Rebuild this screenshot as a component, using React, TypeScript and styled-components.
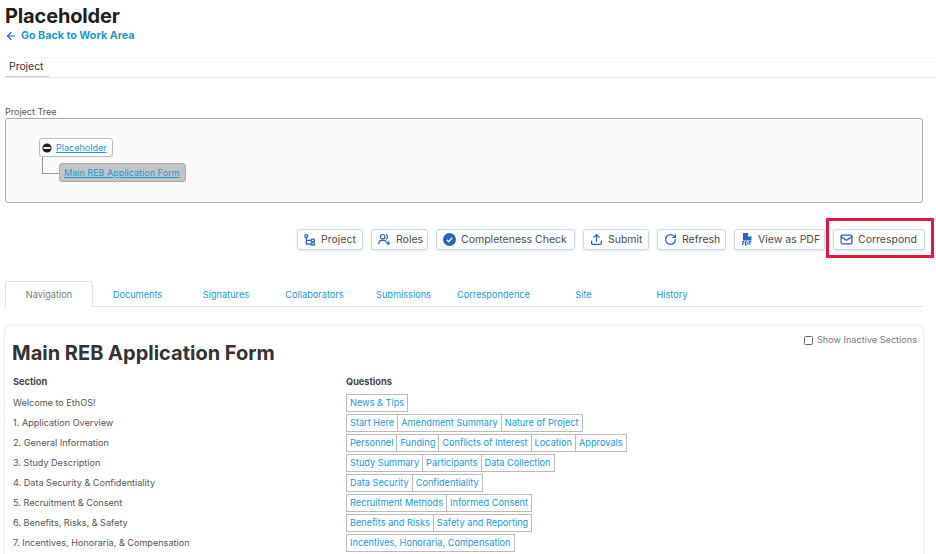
import React from "react";
import styled, { createGlobalStyle } from "styled-components";
import { ArrowLeft, Mail, RotateCw, Upload } from "lucide-react";

const fontStack = `"Inter", "Liberation Sans", sans-serif`;
const linkBlue = "#1a9ad6";
const iconBlue = "#2a62c0";

const GlobalStyle = createGlobalStyle`
  html, body {
    margin: 0;
    padding: 0;
    height: 554px;
    overflow: hidden;
    background: #fff;
    font-family: ${fontStack};
  }
`;

const Page = styled.div`
  position: relative;
  width: 936px;
  height: 554px;
  overflow: hidden;
  box-sizing: border-box;
  padding: 5px 13px 0 5px;
  color: #444;
`;

const Title = styled.h1`
  margin: 0;
  font-size: 20px;
  line-height: 23px;
  font-weight: 700;
  color: #1d1d22;
  letter-spacing: -0.15px;
`;

const BackLink = styled.a`
  display: flex;
  align-items: center;
  gap: 4px;
  height: 15px;
  font-size: 10.7px;
  font-weight: 700;
  color: ${linkBlue};
  svg {
    color: ${iconBlue};
  }
`;

const TopTabs = styled.div`
  display: flex;
  height: 19px;
  margin: 14px -13px 0 0;
  border-top: 1px solid #f4f4f4;
  border-bottom: 1px solid #e6e6e6;
`;

const TopTab = styled.div`
  box-sizing: border-box;
  height: 19px;
  padding: 1px 5px 0 4px;
  font-size: 10.4px;
  line-height: 15px;
  color: #333;
  border-bottom: 1px solid #bcd0ec;
`;

const TreeLabel = styled.div`
  margin-top: 28px;
  font-size: 9px;
  line-height: 12px;
  color: #555;
`;

const TreeBox = styled.div`
  box-sizing: border-box;
  height: 85px;
  padding: 19px 0 0 33px;
  background: #fafafa;
  border: 1px solid #aaa;
  border-radius: 3px;
`;

const RootNode = styled.div`
  display: flex;
  align-items: center;
  gap: 4px;
  box-sizing: border-box;
  width: fit-content;
  height: 19px;
  padding: 0 5px 0 2px;
  background: #fff;
  border: 1px solid #bbb;
  border-radius: 3px;
`;

const NodeLink = styled.a`
  font-size: 9.05px;
  color: ${linkBlue};
  text-decoration: underline;
`;

const ChildRow = styled.div`
  display: flex;
  align-items: flex-start;
  margin-left: 3px;
`;

const Elbow = styled.div`
  width: 16px;
  height: 16px;
  border-left: 1px solid #999;
  border-bottom: 1px solid #999;
`;

const ChildNode = styled.div`
  display: flex;
  align-items: center;
  box-sizing: border-box;
  width: 127px;
  height: 19px;
  margin-top: 6px;
  padding: 0 4px;
  background: #c4c4c4;
  border: 1px solid #aaa;
  border-radius: 3px;
`;

const Toolbar = styled.div`
  display: flex;
  justify-content: flex-end;
  gap: 8px;
  margin: 26px -2px 0 0;
`;

const ActionButton = styled.button<{ $width: number }>`
  display: flex;
  align-items: center;
  gap: 5px;
  box-sizing: border-box;
  width: ${(p) => p.$width}px;
  height: 21px;
  padding: 0 0 0 6px;
  background: #fff;
  border: 1px solid #c9d8f0;
  border-radius: 3px;
  box-shadow: 0 1px 2px rgba(60, 90, 150, 0.15);
  font-family: ${fontStack};
  font-size: 10.5px;
  white-space: nowrap;
  color: #4a4a50;
  svg {
    flex: none;
    color: ${iconBlue};
  }
`;

const Highlight = styled.div`
  position: absolute;
  left: 826px;
  top: 218px;
  width: 108px;
  height: 40px;
  box-sizing: border-box;
  border: 3px solid #e3173e;
`;

const SectionTabs = styled.div`
  display: flex;
  height: 26px;
  margin-top: 31px;
  box-sizing: border-box;
  border-bottom: 1px solid #e2e2e2;
`;

const SectionTab = styled.div<{ $active?: boolean; $width: number }>`
  box-sizing: border-box;
  width: ${(p) => p.$width}px;
  height: ${(p) => (p.$active ? "26px" : "25px")};
  font-size: 9.2px;
  line-height: 27px;
  text-align: center;
  color: ${(p) => (p.$active ? "#777" : linkBlue)};
  background: #fff;
  ${(p) =>
    p.$active &&
    `border: 1px solid #e2e2e2; border-bottom-color: #fff; border-radius: 3px 3px 0 0; line-height: 25px;`}
`;

const Card = styled.div`
  position: relative;
  margin-top: 19px;
  height: 300px;
  box-sizing: border-box;
  padding: 15px 7px 0;
  background: #fff;
  border-radius: 5px;
  box-shadow: 0 0 3px rgba(0, 0, 0, 0.18);
`;

const InactiveToggle = styled.label`
  position: absolute;
  top: 8px;
  right: 6px;
  display: flex;
  align-items: center;
  gap: 4px;
  font-size: 9.15px;
  line-height: 12px;
  color: #777;
`;

const CheckBox = styled.span`
  box-sizing: border-box;
  width: 9px;
  height: 9px;
  border: 1px solid #666;
  border-radius: 1.5px;
`;

const FormTitle = styled.h2`
  margin: 0;
  font-size: 20px;
  line-height: 24px;
  font-weight: 700;
  color: #333;
`;

const Table = styled.div`
  display: grid;
  grid-template-columns: 333px 1fr;
  grid-template-rows: 18px;
  grid-auto-rows: 20px;
  margin: 10px 0 0 1px;
`;

const HeadCell = styled.div`
  font-size: 9.2px;
  font-weight: 700;
  line-height: 14px;
  color: #444;
`;

const SectionCell = styled.div`
  font-size: 9.1px;
  line-height: 19px;
  color: #555;
`;

const ChipRow = styled.div`
  display: flex;
  align-self: center;
`;

const Chip = styled.a<{ $width?: number }>`
  box-sizing: border-box;
  height: 18px;
  padding: 0 3px;
  font-size: 9.2px;
  line-height: 15px;
  white-space: nowrap;
  color: ${linkBlue};
  border: 1px solid #bbb;
  ${(p) => p.$width && `width: ${p.$width}px;`}
  & + & {
    border-left: 0;
  }
`;

const ProjectIcon = () => (
  <svg width="12" height="12" viewBox="0 0 12 12" fill="none" stroke="currentColor" strokeWidth="1.25">
    <rect x="1" y="0.8" width="2.6" height="2.6" rx="0.6" />
    <path d="M2.3 3.4V10H7M2.3 6.4H7" />
    <rect x="7.2" y="5.2" width="3.2" height="2.4" rx="0.6" />
    <rect x="7.2" y="8.8" width="3.2" height="2.4" rx="0.6" />
  </svg>
);

const RolesIcon = () => (
  <svg width="13" height="13" viewBox="0 0 14 13" fill="none" stroke="currentColor" strokeWidth="1.3">
    <circle cx="5" cy="3.5" r="2.4" />
    <path d="M8.6 1.2a2.4 2.4 0 0 1 0 4.6M1 11.5V10a3 3 0 0 1 3-2.6h2.2A3 3 0 0 1 9 9.4M11 8.4v4M9 10.4h4" />
  </svg>
);

const CheckIcon = () => (
  <svg width="13" height="13" viewBox="0 0 12 12">
    <circle cx="6" cy="6" r="6" fill="currentColor" />
    <path d="M3.5 6.2 5.3 8l3.2-3.6" fill="none" stroke="#fff" strokeWidth="1.3" />
  </svg>
);

const PdfIcon = () => (
  <svg width="12" height="13" viewBox="0 0 12 13">
    <path d="M2 0h5l3.5 3.5V7.4H2z" fill="currentColor" />
    <path d="M7 0v3.5h3.5" fill="#fff" />
    <rect x="0.5" y="8" width="11" height="4.6" fill="#fff" />
    <path d="M1 8.5h2v1.6H1.6V12M4.5 8.5v3.5h1.2l.8-1.7-.8-1.8zM8 12V8.5h2.4M8 10h2" fill="none" stroke="currentColor" strokeWidth="1" />
  </svg>
);

const CollapseIcon = () => (
  <svg width="10" height="10" viewBox="0 0 10 10">
    <circle cx="5" cy="5" r="4.6" fill="#222" />
    <rect x="1.6" y="4.1" width="6.8" height="1.8" fill="#fff" />
  </svg>
);

const sectionTabs = [
  { label: "Navigation", width: 88, active: true },
  { label: "Documents", width: 89 },
  { label: "Signatures", width: 88 },
  { label: "Collaborators", width: 89 },
  { label: "Submissions", width: 89 },
  { label: "Correspondence", width: 91 },
  { label: "Site", width: 89 },
  { label: "History", width: 88 },
];

const rows: { section: string; questions: string[] }[] = [
  { section: "Welcome to EthOS!", questions: ["News & Tips"] },
  { section: "1. Application Overview", questions: ["Start Here", "Amendment Summary", "Nature of Project"] },
  { section: "2. General Information", questions: ["Personnel", "Funding", "Conflicts of Interest", "Location", "Approvals"] },
  { section: "3. Study Description", questions: ["Study Summary", "Participants", "Data Collection"] },
  { section: "4. Data Security & Confidentiality", questions: ["Data Security", "Confidentiality"] },
  { section: "5. Recruitment & Consent", questions: ["Recruitment Methods", "Informed Consent"] },
  { section: "6. Benefits, Risks, & Safety", questions: ["Benefits and Risks", "Safety and Reporting"] },
  { section: "7. Incentives, Honoraria, & Compensation", questions: ["Incentives, Honoraria, Compensation"] },
];

export default function App() {
  return (
    <Page>
      <GlobalStyle />
      <Title>Placeholder</Title>
      <BackLink>
        <ArrowLeft size={12} strokeWidth={2.4} />
        Go Back to Work Area
      </BackLink>
      <TopTabs>
        <TopTab>Project</TopTab>
      </TopTabs>
      <TreeLabel>Project Tree</TreeLabel>
      <TreeBox>
        <RootNode>
          <CollapseIcon />
          <NodeLink>Placeholder</NodeLink>
        </RootNode>
        <ChildRow>
          <Elbow />
          <ChildNode>
            <NodeLink>Main REB Application Form</NodeLink>
          </ChildNode>
        </ChildRow>
      </TreeBox>
      <Toolbar>
        <ActionButton $width={66}><ProjectIcon />Project</ActionButton>
        <ActionButton $width={57}><RolesIcon />Roles</ActionButton>
        <ActionButton $width={139}><CheckIcon />Completeness Check</ActionButton>
        <ActionButton $width={66}><Upload size={13} strokeWidth={2.3} />Submit</ActionButton>
        <ActionButton $width={69}><RotateCw size={13} strokeWidth={2.3} />Refresh</ActionButton>
        <ActionButton $width={91}><PdfIcon />View as PDF</ActionButton>
        <ActionButton $width={92}><Mail size={13} strokeWidth={2.3} />Correspond</ActionButton>
      </Toolbar>
      <Highlight />
      <SectionTabs>
        {sectionTabs.map((tab) => (
          <SectionTab key={tab.label} $active={tab.active} $width={tab.width}>
            {tab.label}
          </SectionTab>
        ))}
      </SectionTabs>
      <Card>
        <InactiveToggle>
          <CheckBox />
          Show Inactive Sections
        </InactiveToggle>
        <FormTitle>Main REB Application Form</FormTitle>
        <Table>
          <HeadCell>Section</HeadCell>
          <HeadCell>Questions</HeadCell>
          {rows.map((row) => (
            <React.Fragment key={row.section}>
              <SectionCell>{row.section}</SectionCell>
              <ChipRow>
                {row.questions.map((q) => (
                  <Chip key={q}>{q}</Chip>
                ))}
              </ChipRow>
            </React.Fragment>
          ))}
          <SectionCell />
          <ChipRow>
            <Chip $width={169} />
          </ChipRow>
        </Table>
      </Card>
    </Page>
  );
}
